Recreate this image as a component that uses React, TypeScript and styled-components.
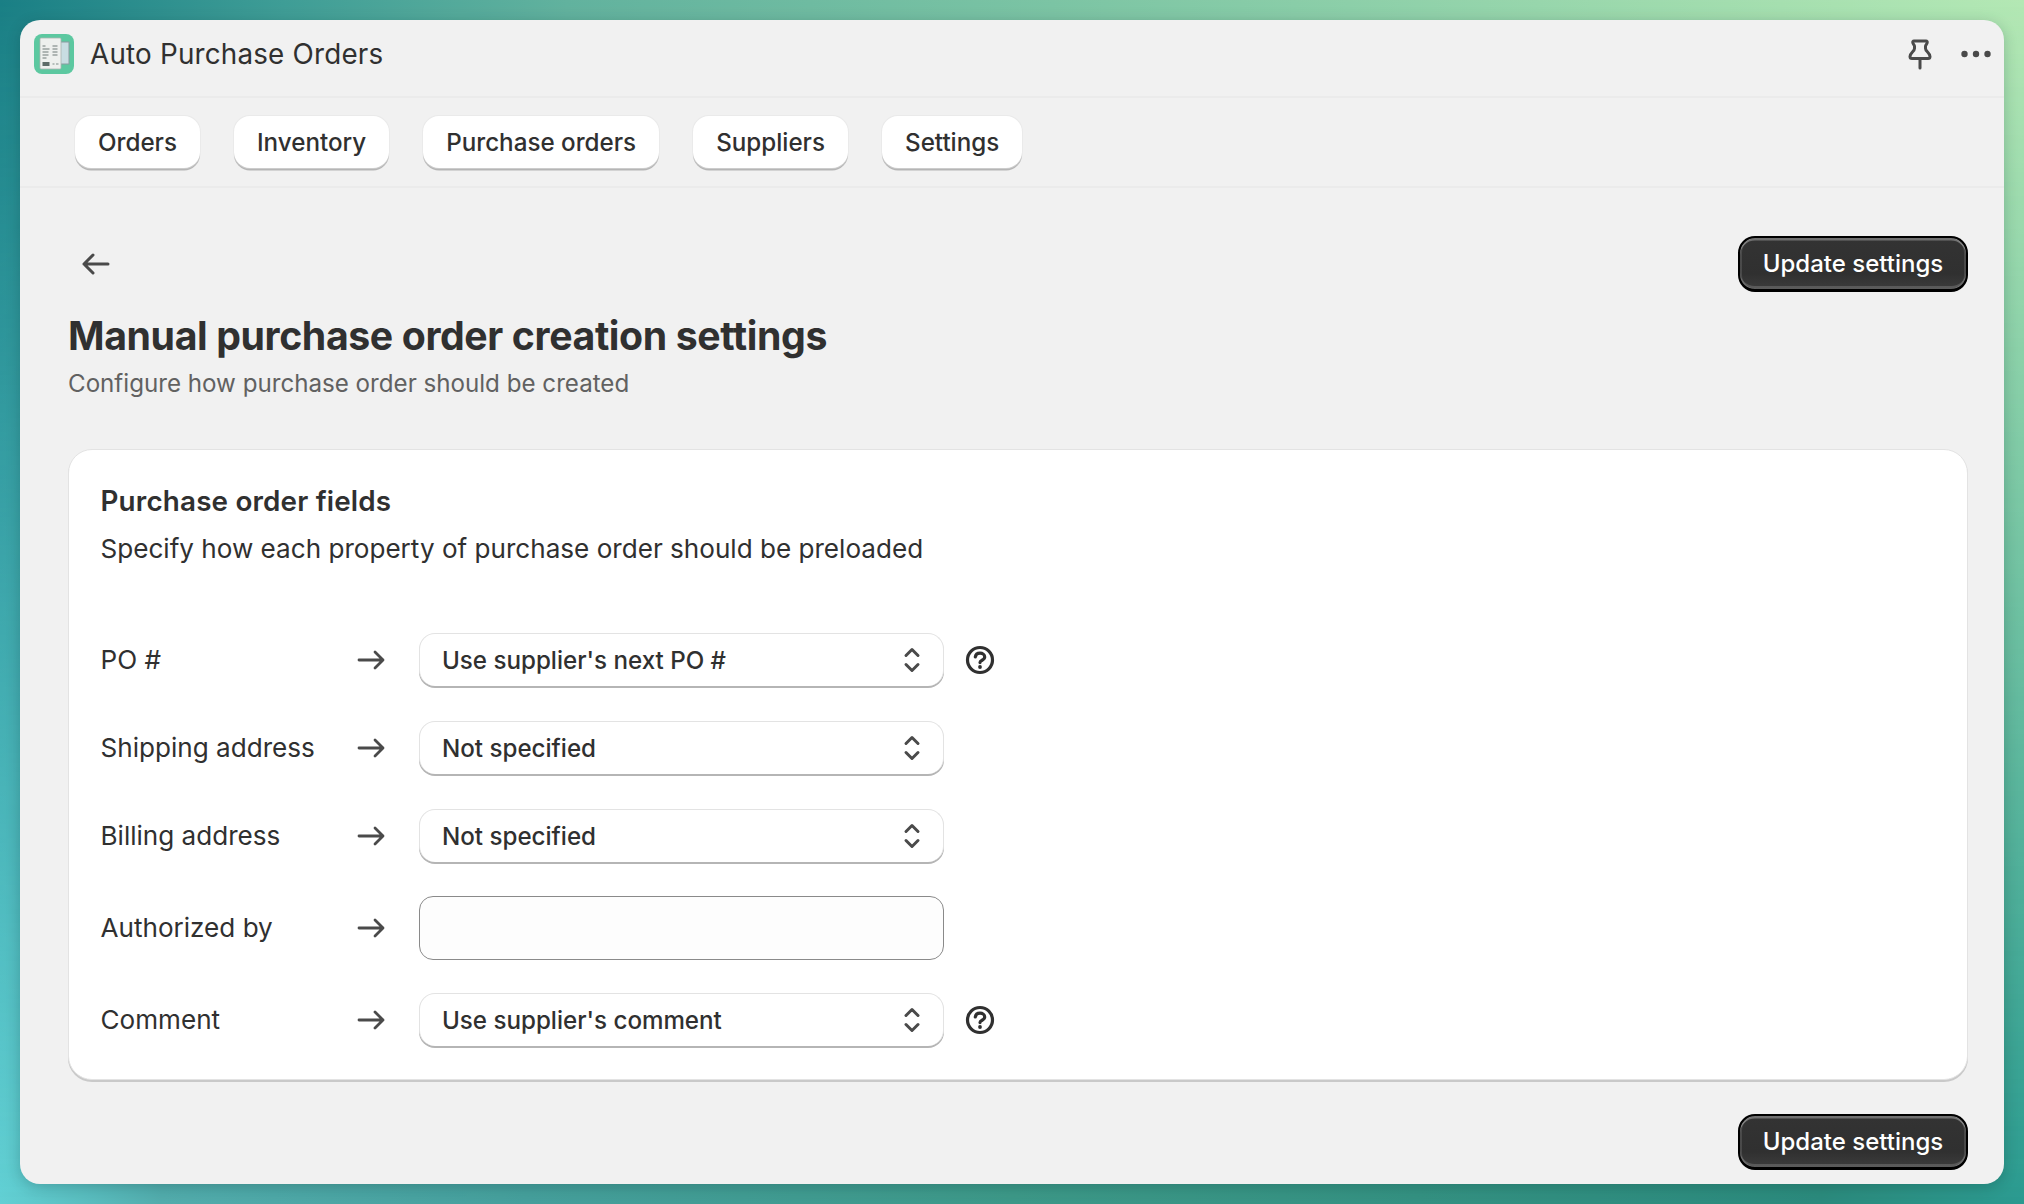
import React from "react";
import styled, { createGlobalStyle } from "styled-components";

const Global = createGlobalStyle`
  html, body { margin: 0; padding: 0; }
  body {
    width: 2024px;
    height: 1204px;
    overflow: hidden;
    font-family: Inter, "Liberation Sans", sans-serif;
    color: #303030;
  }
  * { box-sizing: border-box; }
`;

const Desktop = styled.div`
  position: relative;
  width: 2024px;
  height: 1204px;
  padding: 20px;
  background: linear-gradient(90deg, #1a7f85 0%, #3f9d96 14%, #62b29e 28%, #7cc4a4 52%, #98d6ac 76%, #b4e8b4 100%);
  &::before {
    content: "";
    position: absolute;
    inset: 0;
    background: linear-gradient(90deg, #62d0d4 0%, #52acac 8%, #459f9c 26%, #3c9888 50%, #2a8a7c 90%, #2a9a90 100%);
    mask-image: linear-gradient(180deg, transparent 0%, #000 100%);
  }
`;

const AppWindow = styled.div`
  position: relative;
  width: 1984px;
  height: 1164px;
  background: #f1f1f1;
  border-radius: 20px;
  box-shadow: 0 3px 14px rgba(0, 40, 40, 0.22);
  display: flex;
  flex-direction: column;
  overflow: hidden;
`;

const TitleBar = styled.header`
  height: 78px;
  flex: none;
  display: flex;
  align-items: center;
  padding: 0 13px 8px 14px;
  border-bottom: 2px solid #ebebeb;
`;

const AppIcon = styled.svg`
  width: 40px;
  height: 40px;
  flex: none;
`;

const AppName = styled.div`
  margin-left: 16px;
  font-size: 27.8px;
  letter-spacing: 0.2px;
  font-weight: 400;
  color: #303030;
  flex: 1;
`;

const PinIcon = styled.svg`
  width: 24px;
  height: 32px;
  margin-right: 29px;
  margin-top: 1px;
`;

const DotsIcon = styled.svg`
  width: 30px;
  height: 8px;
`;

const NavBar = styled.nav`
  height: 90px;
  flex: none;
  display: flex;
  align-items: flex-start;
  gap: 34px;
  padding: 18px 0 0 55px;
  border-bottom: 2px solid #ebebeb;
`;

const Tab = styled.button`
  height: 52px;
  padding: 0 23px;
  border: 0;
  border-radius: 16px;
  background: #fff;
  box-shadow: 0 0 0 1px rgba(227, 227, 227, 0.5), 0 2.5px 0 0 #b5b5b5;
  font: 500 24.2px Inter, sans-serif;
  color: #303030;
`;

const Content = styled.main`
  flex: 1;
  padding: 47px 36px 0 48px;
  display: flex;
  flex-direction: column;
`;

const TopRow = styled.div`
  display: flex;
  align-items: center;
  justify-content: space-between;
  height: 58px;
`;

const BackIcon = styled.svg`
  width: 28px;
  height: 22px;
  margin-left: 14px;
`;

const PrimaryButton = styled.button`
  height: 56px;
  width: 230px;
  border: 2px solid #000;
  border-bottom-width: 3px;
  border-radius: 17px;
  background: linear-gradient(180deg, #333 0%, #303030 70%, #3c3c3c 100%);
  box-shadow: inset 0 2.5px 0 rgba(255, 255, 255, 0.3), inset 2px 0 0 rgba(255, 255, 255, 0.12),
    inset -2px 0 0 rgba(255, 255, 255, 0.12), inset 0 -3px 0 rgba(255, 255, 255, 0.16);
  color: #fff;
  font: 500 24px Inter, sans-serif;
  padding: 0 0 1px;
`;

const Heading = styled.h1`
  margin: 15px 0 0;
  font-size: 39.25px;
  line-height: 56px;
  font-weight: 700;
  letter-spacing: -0.4px;
  color: #303030;
`;

const Subheading = styled.p`
  margin: 4px 0 0;
  font-size: 24.15px;
  line-height: 32px;
  color: #616161;
`;

const Card = styled.section`
  margin-top: 49px;
  height: 631px;
  background: #fff;
  border: 1.5px solid #e3e3e3;
  border-radius: 24px;
  box-shadow: 0 2px 0 0 #c9c9c9;
  padding: 31.5px 31.5px 0;
`;

const CardTitle = styled.h2`
  margin: 0;
  font-size: 27.8px;
  letter-spacing: 0.18px;
  line-height: 38px;
  font-weight: 600;
  color: #303030;
`;

const CardText = styled.p`
  margin: 10px 0 0;
  font-size: 26.1px;
  line-height: 38px;
  color: #303030;
`;

const Fields = styled.div`
  margin-top: 66px;
  display: flex;
  flex-direction: column;
  gap: 36px;
`;

const Row = styled.div`
  display: flex;
  align-items: center;
  height: 52px;
`;

const TallRow = styled(Row)`
  height: 60px;
`;

const FieldLabel = styled.div`
  width: 256.5px;
  font-size: 26.1px;
  color: #303030;
`;

const ArrowIcon = styled.svg`
  width: 28px;
  height: 20px;
  margin-right: 33.5px;
  flex: none;
`;

const SelectBox = styled.div`
  width: 525px;
  height: 53px;
  flex: none;
  display: flex;
  align-items: center;
  justify-content: space-between;
  padding: 0 20.5px 0 22.5px;
  background: #fff;
  border: 1.5px solid #e3e3e3;
  border-bottom: 0;
  border-radius: 16px;
  box-shadow: 0 2px 0 0 #b5b5b5;
  font-size: 24.15px;
  font-weight: 500;
  color: #303030;
`;

const ChevronIcon = styled.svg`
  width: 20px;
  height: 30px;
`;

const TextInput = styled.input`
  width: 525px;
  height: 64px;
  flex: none;
  border: 1.5px solid #8a8a8a;
  border-radius: 14px;
  background: #fdfdfd;
  outline: none;
  padding: 0 24px;
`;

const HelpIcon = styled.svg`
  width: 30px;
  height: 30px;
  margin-left: 21.5px;
  flex: none;
`;

const Footer = styled.div`
  display: flex;
  justify-content: flex-end;
  margin-top: 34px;
`;

const Logo = () => (
  <AppIcon viewBox="0 0 40 40">
    <rect width="40" height="40" rx="8" fill="#5cc8a0" />
    <rect x="26" y="8" width="9" height="22" fill="#c8dde2" stroke="#8a9aa0" strokeWidth="1" />
    <rect x="6" y="4" width="21" height="31" rx="1" fill="#eef0ee" stroke="#a9b4b0" strokeWidth="0.8" />
    <path d="M8.500 12h3M8.500 15h7M8.500 18h6M8.500 21h6M8.500 24h4M18.500 12h5M18.500 15h5M18.500 18h5M18.500 21h5" stroke="#6f7a78" strokeWidth="1.2" />
    <rect x="8.500" y="28" width="7" height="4" fill="#5d6b68" />
    <path d="M18.500 30h2M22 30h2.500" stroke="#7f8b88" strokeWidth="1.200" />
  </AppIcon>
);

const Pin = () => (
  <PinIcon viewBox="0 0 24 32" fill="none" stroke="#4a4a4a" strokeWidth="3" strokeLinejoin="round" strokeLinecap="round">
    <path d="M6 2h12c1 0 1.400 1 1.200 1.800-.3 1.500-1.700 2-1.700 3.400v2.300c0 3 4.500 4.200 4.500 8 0 1.200-1 2-2 2H4c-1 0-2-.8-2-2 0-3.800 4.500-5 4.500-8V7.200c0-1.400-1.400-1.900-1.700-3.400C4.600 3 5 2 6 2Z" />
    <path d="M12 20v9" />
  </PinIcon>
);

const Dots = () => (
  <DotsIcon viewBox="0 0 30 8" fill="#4a4a4a">
    <circle cx="3.500" cy="4" r="3.200" />
    <circle cx="15" cy="4" r="3.200" />
    <circle cx="26.500" cy="4" r="3.200" />
  </DotsIcon>
);

const Back = () => (
  <BackIcon viewBox="0 0 28 22" fill="none" stroke="#4a4a4a" strokeWidth="3" strokeLinecap="round" strokeLinejoin="round">
    <path d="M26 11H2M11 2l-9 9 9 9" />
  </BackIcon>
);

const Arrow = () => (
  <ArrowIcon viewBox="0 0 28 20" fill="none" stroke="#4a4a4a" strokeWidth="2.800" strokeLinecap="round" strokeLinejoin="round">
    <path d="M2 10h24M18 2l8 8-8 8" />
  </ArrowIcon>
);

const Chevrons = () => (
  <ChevronIcon viewBox="0 0 20 30" fill="none" stroke="#4a4a4a" strokeWidth="3" strokeLinecap="round" strokeLinejoin="round">
    <path d="M4 10.500l6-6 6 6M4 19.500l6 6 6-6" />
  </ChevronIcon>
);

const Help = () => (
  <HelpIcon viewBox="0 0 30 30" fill="none" stroke="#303030" strokeWidth="3.200" strokeLinecap="round">
    <circle cx="15" cy="15" r="12.500" />
    <path d="M10.300 12c.3-2.400 2.200-3.800 4.700-3.800s4.700 1.500 4.700 3.800c0 3.300-4.700 3.100-4.700 5.600" />
    <circle cx="15" cy="22" r="1.900" fill="#303030" stroke="none" />
  </HelpIcon>
);

const tabs = ["Orders", "Inventory", "Purchase orders", "Suppliers", "Settings"];

const Select = ({ value }: { value: string }) => (
  <SelectBox>
    <span>{value}</span>
    <Chevrons />
  </SelectBox>
);

export default function App() {
  return (
    <Desktop>
      <Global />
      <AppWindow>
        <TitleBar>
          <Logo />
          <AppName>Auto Purchase Orders</AppName>
          <Pin />
          <Dots />
        </TitleBar>
        <NavBar>
          {tabs.map((t) => (
            <Tab key={t}>{t}</Tab>
          ))}
        </NavBar>
        <Content>
          <TopRow>
            <Back />
            <PrimaryButton>Update settings</PrimaryButton>
          </TopRow>
          <Heading>Manual purchase order creation settings</Heading>
          <Subheading>Configure how purchase order should be created</Subheading>
          <Card>
            <CardTitle>Purchase order fields</CardTitle>
            <CardText>Specify how each property of purchase order should be preloaded</CardText>
            <Fields>
              <Row>
                <FieldLabel>PO #</FieldLabel>
                <Arrow />
                <Select value="Use supplier's next PO #" />
                <Help />
              </Row>
              <Row>
                <FieldLabel>Shipping address</FieldLabel>
                <Arrow />
                <Select value="Not specified" />
              </Row>
              <Row>
                <FieldLabel>Billing address</FieldLabel>
                <Arrow />
                <Select value="Not specified" />
              </Row>
              <TallRow>
                <FieldLabel>Authorized by</FieldLabel>
                <Arrow />
                <TextInput />
              </TallRow>
              <Row>
                <FieldLabel>Comment</FieldLabel>
                <Arrow />
                <Select value="Use supplier's comment" />
                <Help />
              </Row>
            </Fields>
          </Card>
          <Footer>
            <PrimaryButton>Update settings</PrimaryButton>
          </Footer>
        </Content>
      </AppWindow>
    </Desktop>
  );
}
